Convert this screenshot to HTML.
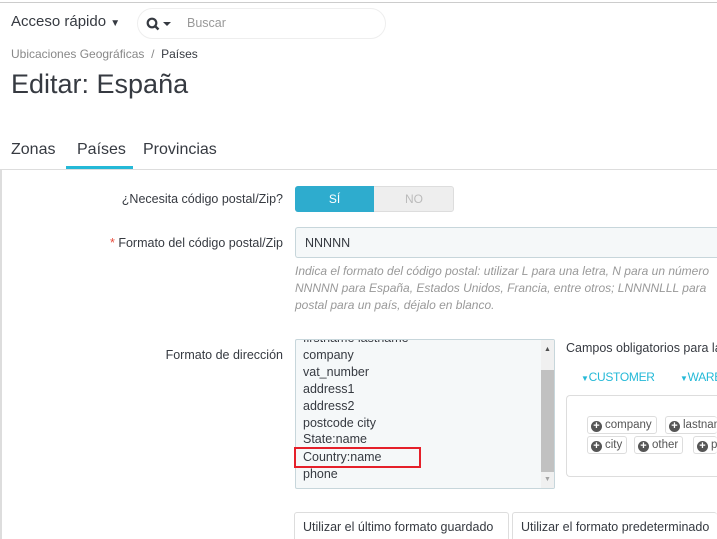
<!DOCTYPE html>
<html><head><meta charset="utf-8"><style>
*{margin:0;padding:0;box-sizing:border-box}
html,body{width:717px;height:539px;overflow:hidden}
body{background:#fff;font-family:"Liberation Sans",sans-serif;color:#363a41;position:relative}
.a{position:absolute;white-space:nowrap}
.lbl{font-size:12.5px;color:#363a41;text-align:right;right:434px}
.help{font-size:11.5px;font-style:italic;color:#999;left:295px}
.ta{font-size:12.5px;left:303px;color:#363a41}
.tag{position:absolute;height:18px;border:1px solid #ddd;border-radius:3px;font-size:11.5px;line-height:16px;padding:0 4px 0 3px;color:#555;background:#fff;white-space:nowrap;overflow:hidden}
.tag b{display:inline-block;width:11px;height:11px;border-radius:50%;background:#555;color:#fff;font-size:11px;line-height:11px;text-align:center;vertical-align:-1px;margin-right:3px;font-weight:bold}
.btn{position:absolute;height:30px;border:1px solid #ddd;border-radius:3px;font-size:12.5px;padding:7px 8px;background:#fff;white-space:nowrap;overflow:hidden}
</style></head><body>
<div class="a" style="left:0;top:0;width:717px;height:3px;border-bottom:1px solid #ccc;background:#fff"></div>
<div class="a" style="left:11px;top:13px;font-size:15px">Acceso rápido <span style="font-size:10px">▼</span></div>
<div class="a" style="left:137px;top:8px;width:249px;height:31px;border:1px solid #eee;border-radius:16px"></div>
<svg class="a" style="left:146px;top:17px" width="26" height="14"><circle cx="6" cy="6" r="4.3" fill="none" stroke="#363a41" stroke-width="2.2"/><line x1="9" y1="9" x2="12.5" y2="12.5" stroke="#363a41" stroke-width="2.4"/><path d="M17 5h8l-4 4z" fill="#363a41"/></svg>
<div class="a" style="left:187px;top:16px;font-size:12.5px;color:#999">Buscar</div>
<div class="a" style="left:11px;top:47px;font-size:12px;color:#888">Ubicaciones Geográficas &nbsp;/&nbsp; <span style="color:#363a41">Países</span></div>
<div class="a" style="left:11px;top:69px;font-size:27px">Editar: España</div>
<div class="a" style="left:11px;top:141px;font-size:16px">Zonas</div>
<div class="a" style="left:77px;top:141px;font-size:16px">Países</div>
<div class="a" style="left:143px;top:141px;font-size:16px">Provincias</div>
<div class="a" style="left:66px;top:166px;width:67px;height:3px;background:#25b9d7"></div>
<div class="a" style="left:0;top:169px;width:717px;height:1px;background:#ddd"></div>
<div class="a" style="left:0;top:170px;width:2px;height:369px;background:#ddd"></div>

<div class="a lbl" style="top:192px">¿Necesita código postal/Zip?</div>
<div class="a" style="left:295px;top:186px;width:159px;height:26px;border-radius:3px;background:#eee;border:1px solid #ddd"></div>
<div class="a" style="left:295px;top:186px;width:79px;height:26px;border-radius:3px 0 0 3px;background:#2eacce;color:#fff;font-size:12px;text-align:center;line-height:26px">SÍ</div>
<div class="a" style="left:374px;top:186px;width:80px;height:26px;color:#bbb;font-size:12px;text-align:center;line-height:26px">NO</div>

<div class="a lbl" style="top:236px"><span style="color:#e74c3c">*</span> Formato del código postal/Zip</div>
<div class="a" style="left:295px;top:227px;width:422px;height:31px;background:#f5f8f9;border:1px solid #c7d6db;border-right:none;border-radius:3px 0 0 3px;font-size:12.5px;padding:8px 9px">NNNNN</div>
<div class="a help" style="top:264px;font-size:12px">Indica el formato del código postal: utilizar L para una letra, N para un número</div>
<div class="a help" style="top:281px;font-size:12px">NNNNN para España, Estados Unidos, Francia, entre otros; LNNNNLLL para</div>
<div class="a help" style="top:298px;font-size:12px">postal para un país, déjalo en blanco.</div>

<div class="a lbl" style="top:348px">Formato de dirección</div>
<div class="a" style="left:295px;top:339px;width:260px;height:150px;background:#f5f8f9;border:1px solid #c7d6db;border-radius:2px;overflow:hidden">
<div class="a" style="left:245px;top:0;width:14px;height:149px;background:#f0f0f0"></div>
<div class="a" style="left:245px;top:30px;width:14px;height:102px;background:#c1c1c1"></div>
<div class="a" style="left:248px;top:6px;font-size:7px;color:#505050">▲</div>
<div class="a" style="left:248px;top:136px;font-size:7px;color:#a3a3a3">▼</div>
<div class="a ta" style="left:7px;top:-9px">firstname lastname</div>
<div class="a ta" style="left:7px;top:8px">company</div>
<div class="a ta" style="left:7px;top:25px">vat_number</div>
<div class="a ta" style="left:7px;top:42px">address1</div>
<div class="a ta" style="left:7px;top:59px">address2</div>
<div class="a ta" style="left:7px;top:76px">postcode city</div>
<div class="a ta" style="left:7px;top:92px">State:name</div>
<div class="a ta" style="left:7px;top:110px">Country:name</div>
<div class="a ta" style="left:7px;top:127px">phone</div>
</div>
<div class="a" style="left:294px;top:447px;width:127px;height:21px;border:2px solid #e5202a"></div>

<div class="a" style="left:566px;top:341px;font-size:12.5px">Campos obligatorios para la</div>
<div class="a" style="left:581px;top:370px;font-size:12px;color:#25b9d7;letter-spacing:-0.3px"><span style="font-size:8px">▼</span>CUSTOMER</div>
<div class="a" style="left:680px;top:370px;font-size:12px;color:#25b9d7;letter-spacing:-0.3px;width:37px;overflow:hidden"><span style="font-size:8px">▼</span>WAREHOUSE</div>
<div class="a" style="left:566px;top:395px;width:151px;height:82px;border:1px solid #ddd;border-right:none;border-radius:4px 0 0 4px"></div>
<div class="tag" style="left:587px;top:416px"><b>+</b>company</div>
<div class="tag" style="left:665px;top:416px;width:52px;border-right:none"><b>+</b>lastname</div>
<div class="tag" style="left:587px;top:436px"><b>+</b>city</div>
<div class="tag" style="left:634px;top:436px"><b>+</b>other</div>
<div class="tag" style="left:693px;top:436px;width:24px;border-right:none"><b>+</b>phone</div>

<div class="btn" style="left:294px;top:512px;width:215px">Utilizar el último formato guardado</div>
<div class="btn" style="left:512px;top:512px;width:205px;border-right:none">Utilizar el formato predeterminado</div>
</body></html>
